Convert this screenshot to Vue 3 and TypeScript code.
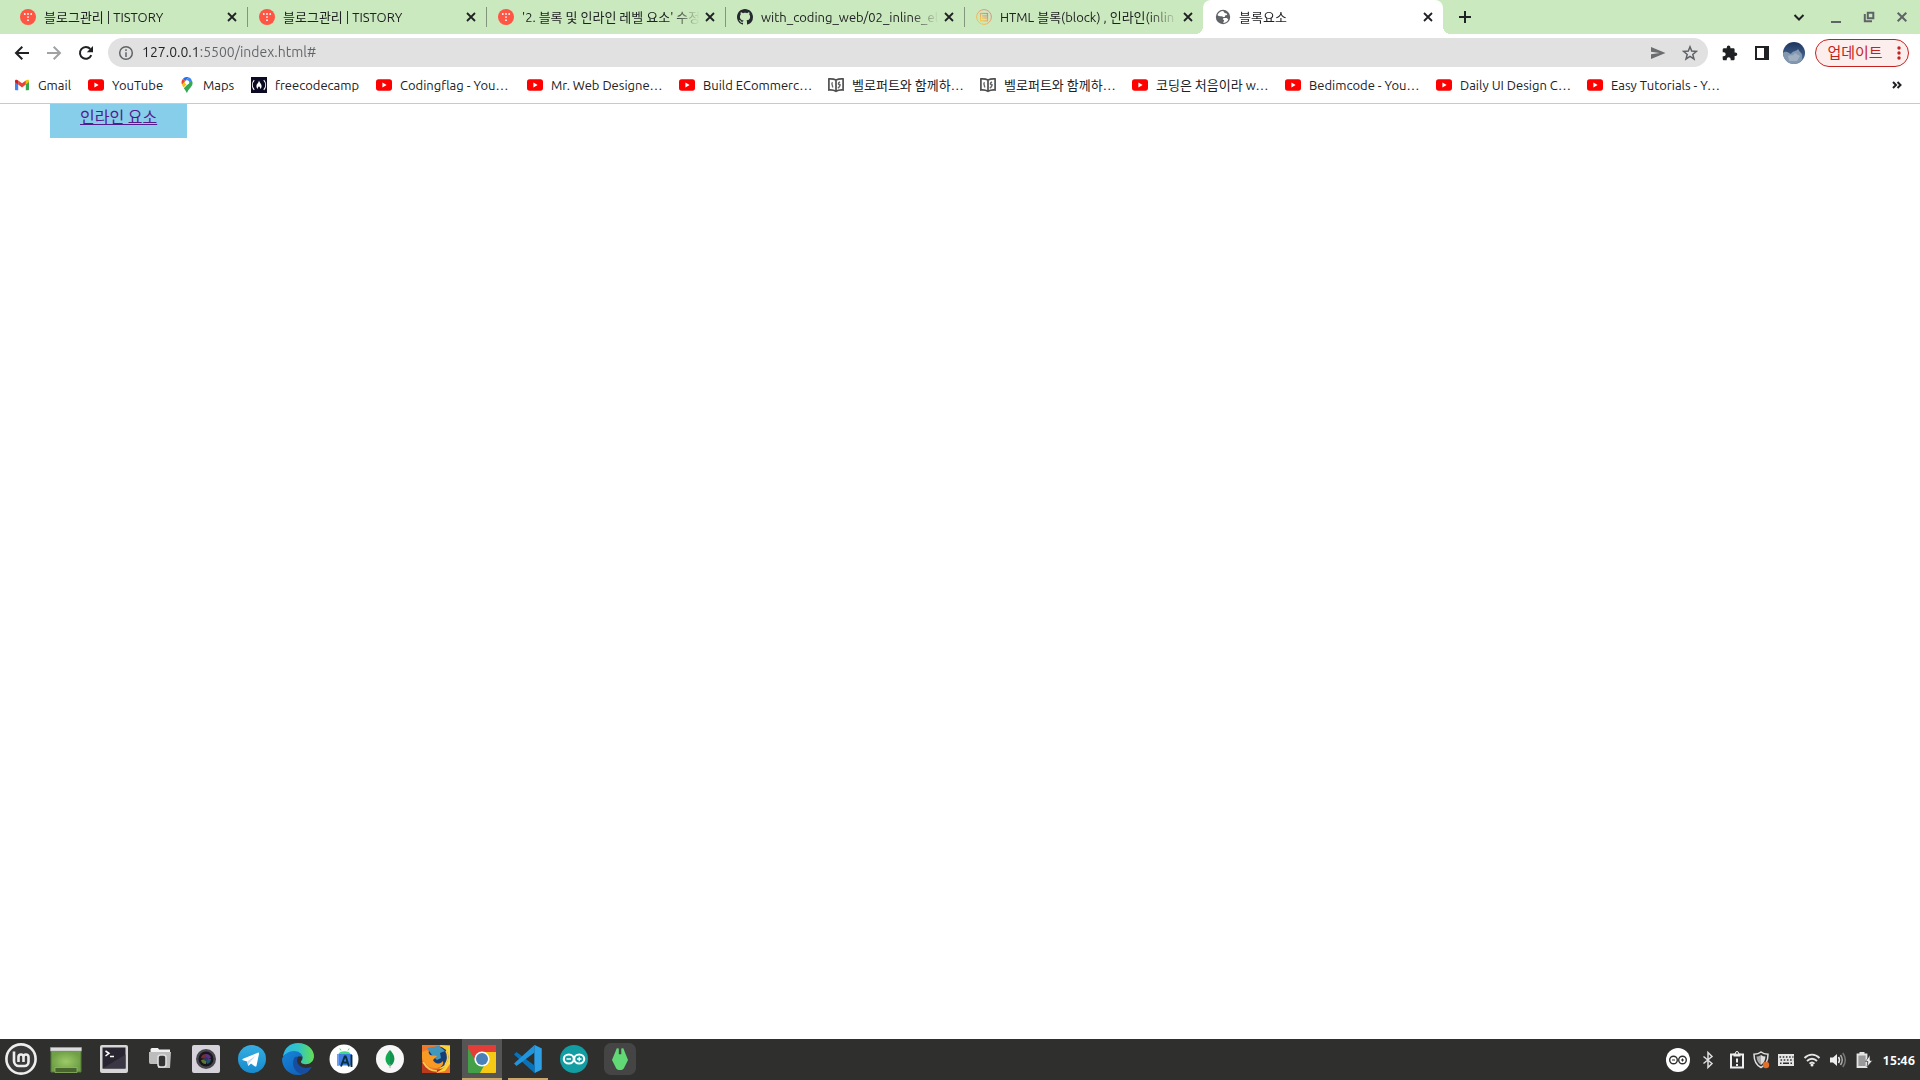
<script setup lang="ts">
import { ref } from 'vue'

interface Tab { icon: string; title: string }
interface Bookmark { icon: string; label: string; width: number }
interface TaskItem { icon: string; name: string; state?: string }
interface TrayItem { icon: string; name: string; width: number; size: number }

const address = ref('127.0.0.1:5500/index.html#')

/* Small artwork, all drawn on a 16 x 16 grid */
const small: Record<string, string> = {
  tistory: '<circle cx="8" cy="8" r="8" fill="#ff5544"/><g fill="#fff"><circle cx="4.8" cy="5" r=".9"/><circle cx="8" cy="5" r=".9"/><circle cx="11.2" cy="5" r=".9"/><circle cx="8" cy="8.1" r=".9"/><circle cx="8" cy="11.2" r=".9"/></g>',
  github: '<path fill="#24292f" d="M8 0C3.58 0 0 3.58 0 8c0 3.54 2.29 6.53 5.47 7.59.4.07.55-.17.55-.38 0-.19-.01-.82-.01-1.49-2.01.37-2.53-.49-2.69-.94-.09-.23-.48-.94-.82-1.13-.28-.15-.68-.52-.01-.53.63-.01 1.08.58 1.23.82.72 1.21 1.87.87 2.33.66.07-.52.28-.87.51-1.07-1.78-.2-3.64-.89-3.64-3.95 0-.87.31-1.59.82-2.15-.08-.2-.36-1.02.08-2.12 0 0 .67-.21 2.2.82.64-.18 1.32-.27 2-.27s1.36.09 2 .27c1.53-1.04 2.2-.82 2.2-.82.44 1.1.16 1.92.08 2.12.51.56.82 1.27.82 2.15 0 3.07-1.87 3.75-3.65 3.95.29.25.54.73.54 1.48 0 1.07-.01 1.93-.01 2.2 0 .21.15.46.55.38A8.01 8.01 0 0 0 16 8c0-4.42-3.58-8-8-8z"/>',
  blog: '<defs><linearGradient id="blogRing" x1="1" y1="0" x2="0" y2="1"><stop offset="0" stop-color="#dd7f95"/><stop offset="1" stop-color="#f5cf45"/></linearGradient></defs><g fill="none" stroke="url(#blogRing)"><circle cx="8" cy="8" r="7.4"/><rect x="4.5" y="4.5" width="7" height="7.4" stroke-width="1.2"/><path d="M6 7h4.200l-.01.01M6 9.200h4.200l-.01.01" stroke-width="1.2"/></g>',
  globe: '<circle cx="8" cy="8" r="7.2" fill="#5f6368"/><path fill="#fff" d="M8.200 1.900c-2.700 0-4.900 1.700-5.700 4 1.300 1.300 3 1.700 4.500 1.300l1.200.9 1.500-.2.7-1.600 1.900-.4-.6-1.500-2-.4zM8.600 8.900l3.200.2 1.500 1.300c-.9 2-2.800 3.400-5.100 3.500l.9-2.700-1.300-1z"/>',
  gmail: '<path fill="#4285f4" d="M1 4.200v8.100c0 .6.4 1 1 1h2.200V6.700z"/><path fill="#34a853" d="M15 4.200v8.100c0 .6-.4 1-1 1h-2.200V6.700z"/><path fill="#fbbc04" d="M11.800 3.500v4L15 5.100V4c0-1.500-1.300-1.600-2.200-1z"/><path fill="#ea4335" d="M4.200 7.500v-4L8 6.300l3.800-2.800v4L8 10.400z"/><path fill="#c5221f" d="M1 4v1.100l3.200 2.400v-4l-1-.6C2.300 2.400 1 2.600 1 4z"/>',
  youtube: '<rect y="2.300" width="16" height="11.400" rx="2.600" fill="#f00"/><path fill="#fff" d="m6.400 5.600 4.200 2.400-4.200 2.400z"/>',
  maps: '<path fill="#1a73e8" d="M9.600.3a5.500 5.500 0 0 0-5.800 1.600l2.600 2.200z"/><path fill="#ea4335" d="M3.800 1.900A5.500 5.500 0 0 0 3 7.600l3.400-3.500z"/><path fill="#4285f4" d="M9.600.3 6.300 4.200a2.200 2.200 0 0 1 3.500 2.700l3-3.700A5.500 5.500 0 0 0 9.600.3z"/><path fill="#fbbc04" d="M6.300 4.200 3 7.700c.3 1 1 1.800 1.700 2.800l5.100-6.100z"/><path fill="#34a853" d="m12.800 3.200-8 8c1.500 1.800 2.200 3.200 3.200 4.800 1.200-3.500 3.900-5.400 5.100-7.700.8-1.600.5-3.700-.3-5.100z"/><circle cx="8" cy="5.500" r="2.100" fill="#fff"/>',
  fcc: '<path fill="#0a0a23" d="M0 0h16v16H0z"/><path fill="none" stroke="#fff" stroke-width="1.100" d="M3.200 3.200C.8 6 .8 10 3.200 12.800M12.800 3.200c2.400 2.800 2.400 6.800 0 9.600"/><path fill="#fff" d="M8 3.600c.4 2.500 2.600 3.200 2.600 5.500 0 1.500-.6 2.500-1.600 3 .4-1.300 0-1.900-1-2.800-1 .9-1.400 1.500-1 2.800-1-.5-1.600-1.500-1.600-3C5.400 6.900 7.600 6.200 8 3.600z"/>',
  book: '<path fill="#fff" stroke="#505050" stroke-width="1.700" d="M.9 1.900C4 1.500 6 2 8 3c2-1 4-1.500 7.100-1.100V13C12 12.700 10 13.100 8 14.300 6 13.100 4 12.700.9 13zM8 3v11"/><path fill="none" stroke="#666" stroke-width="1.400" d="M4.500 5.200c-2 2 1 3.500 0 5.300M12 5c-2.500 1-1.700 3-.4 2.500s-.2 3-1.800 3.500"/>',
}

const big: Record<string, string> = {
  mint: '<circle cx="16" cy="16" r="14.600" fill="#3b3b3b" stroke="#eee" stroke-width="2.600"/><path fill="none" stroke="#eee" stroke-width="2.600" d="M9 8.500v9.500a5 5 0 0 0 5 5h5.500a4 4 0 0 0 4-4v-5a2.500 2.500 0 0 0-5 0v5-5a2.500 2.500 0 0 0-5 0v5"/>',
  desktop: '<defs><radialGradient id="dg"><stop stop-color="#9dcb68"/><stop offset="1" stop-color="#6f9f46"/></radialGradient></defs><path fill="url(#dg)" stroke="#557a38" d="M1 8h30v21H1z"/><path fill="#ddd" stroke="#aaa" stroke-width=".6" d="M.5 4.500h31V8H.5z"/><path fill="#49662f" stroke="#a2cf70" stroke-width=".6" d="M5 29.500v-5h22v5z"/>',
  terminal: '<rect x="2" y="2" width="28" height="28" rx="2" fill="#d6d6d6"/><path fill="#2a2631" d="M4.500 4.500h23v21h-23z"/><path fill="#3c3744" d="m4.500 25.500 23-14v14z"/><path fill="none" stroke="#fff" stroke-width="1.500" d="m7.500 8 3.500 2.300L7.500 13M12 13.500h4"/>',
  files: '<path fill="#f1f1f1" d="M6.500 6.500q0-1.500 1.500-1.500h6l1 1.500h11v3H6.500z"/><path fill="#bdbdbd" d="M5 9h22l-1 16H14v-4H6.500Q5 21 5 19z"/><rect x="14" y="12" width="8" height="12" rx="2.500" fill="#343434" stroke="#dedede" stroke-width="1.600"/>',
  camera: '<rect x="2" y="2" width="28" height="28" rx="2" fill="#d5d2da"/><circle cx="16" cy="16" r="10" fill="#47474b"/><circle cx="16" cy="16" r="7.500" fill="#19151e"/><g opacity=".7"><path fill="#7b3dab" d="M16 11a5 5 0 0 1 5 4l-5 2z"/><path fill="#226f87" d="M21 16a5 5 0 0 1-4 5l-2-5z"/><path fill="#7ca134" d="M16 21a5 5 0 0 1-5-4l5-1z"/><path fill="#a33534" d="M11 15a5 5 0 0 1 5-4v5z"/></g><circle cx="16" cy="16" r="2" fill="#243b64"/>',
  telegram: '<defs><linearGradient id="tgSky" x2="0" y2="1"><stop stop-color="#37aee2"/><stop offset="1" stop-color="#168acd"/></linearGradient></defs><circle cx="16" cy="16" r="14" fill="url(#tgSky)"/><path fill="#fff" d="m7 15.700 14.800-6c.8-.3 1.500.2 1.200 1.400l-2.500 11.600c-.2.9-.8 1.100-1.500.7L15 20.600l-2.100 2c-.6.5-.9.1-1-.5l-.8-3.600L7 17.200c-.8-.4-.8-1.100 0-1.500z"/><path fill="#c8daea" d="m11.100 18.500 9-6-7 7.400-.2 2.700z"/>',
  edge: '<defs><linearGradient id="edgeTop"><stop stop-color="#2fb5e7"/><stop offset=".5" stop-color="#31c5c5"/><stop offset="1" stop-color="#65df51"/></linearGradient><linearGradient id="edgeLow" x2="1" y2="1"><stop stop-color="#1687dc"/><stop offset="1" stop-color="#0f58ae"/></linearGradient></defs><path fill="url(#edgeTop)" d="M1 14C2 5 8 0 16 0c10 0 16 7 16 13 0 6-5 9-10 8-3-.5-4-2-2-4 2-3-1-8-7-8C7 9 2 12 1 14z"/><path fill="url(#edgeLow)" d="M0 16C2 11 7 8 12 8c5 0 8 3 8.500 6-5-3-9 3-6 8s9 6 15 2C26 30 21 32 16 32 7 32 0 25 0 16z"/><path fill="#174da0" d="M13 14c-4 5-2 15 7 17 4-1 8-4 9.800-7.500-6 3-12 1-14-3-1.300-2.700-.8-5 .7-7z"/>',
  android: '<circle cx="16" cy="16" r="14.500" fill="#fff"/><path fill="#3ddc84" d="M10 11.500a7 5 0 0 1 13 0z"/><path stroke="#3ddc84" d="m13 7.500-1.200-2M20 7.500l1.200-2"/><path fill="#3f7de0" d="M9 11h15v11.500H9z"/><path fill="#6ba0f5" d="M9 11h2v11.500H9z"/><path fill="none" stroke="#073042" stroke-width="1.900" d="m13 23.500 3.700-10h1l3.300 10M14 19.500h6M23.500 12v12"/>',
  mongo: '<circle cx="16" cy="16" r="14" fill="#f7f7f7"/><path fill="#10aa50" d="M16 7c-4 4-6 9-3 13.500 1 1.500 2 2 3 2.700z"/><path fill="#12924f" d="M16 7c4 4 6 9 3 13.500-1 1.500-2 2-3 2.700z"/><path stroke="#a5a8a6" d="M16 21v4"/>',
  firefox: '<path fill="#ef792b" d="M2 2h28v28H2z"/><path fill="#fbd33a" d="m20 2 10 1v18l-5 7-9 2c9-7 8-20 4-28z"/><circle cx="18" cy="14" r="10.500" fill="#183d75"/><path fill="#4297bd" d="m7 5 12-2 6 5-5 2 1 5-4 2-5-5z"/><path fill="#f89a24" d="M2 9 7 7l3 5 7 1-4 4c2 4 6 5 10 1 1 4-2 7-6 7-8 1-13-5-15-10z"/><path fill="#bc3b1e" d="M2 18c5 7 12 12 23 6l-9 6H2z"/><path fill="none" stroke="#fbc94d" stroke-width="1.700" d="M3 19c4 7 9 9 14 9M26 8c3 4 2 10-1 14"/>',
  chrome: '<defs><clipPath id="chromeTile"><rect x="2" y="2" width="28" height="28" rx="1"/></clipPath></defs><g clip-path="url(#chromeTile)"><path fill="#43a047" d="M2 2h28v28H2z"/><path fill="#f6c915" d="M16 9h14v21H14l6-11z"/><path fill="#e43d38" d="M2 2h28v7H16l-6 10L2 5z"/></g><circle cx="16" cy="16" r="7.600" fill="#fff"/><circle cx="16" cy="16" r="6" fill="#4880b7"/>',
  vscode: '<path fill="#0875b8" d="m22.500 2 7.500 3.500v21L22.500 30V2z"/><path fill="#2da0e6" d="m22.500 2 7 3.500v21l-7 3.500z"/><path fill="#0873b8" d="M2 11.500 4.500 9l18 13.500V30z"/><path fill="#2195dc" d="M2 20.500 4.500 23l18-13.500V2z"/>',
  arduino: '<circle cx="16" cy="16" r="14" fill="#129da3"/><g fill="none" stroke="#fff" stroke-width="2.100"><ellipse cx="10.800" cy="16" rx="5" ry="4.500"/><ellipse cx="21.200" cy="16" rx="5" ry="4.500"/></g><path stroke="#fff" stroke-width="1.300" d="M8.500 16H13m6 0h4.500m-2.250-2.200v4.400"/>',
  greenapp: '<rect width="32" height="32" rx="7" fill="#454545"/><path fill="#61da76" d="m12.800 5.300 2 .3v5.600h2.500V5.600l2-.3L24 17l-4 8c-.8 1.500-1.800 2-4 2s-3.200-.5-4-2l-4-8z"/>',
}

/* Tray glyphs on a 24 x 24 grid */
const trayArt: Record<string, string> = {
  arduino: '<circle cx="12" cy="12" r="12" fill="#fff"/><g fill="none" stroke="#2f2f2e" stroke-width="1.400"><circle cx="7.500" cy="12" r="3.800"/><circle cx="16.500" cy="12" r="3.800"/><path d="M6 12h3m6 0h3m-1.500-1.500v3" stroke-width="1"/></g>',
  bluetooth: '<path fill="none" stroke="#dedede" stroke-width="1.500" d="m7.500 8.500 8.500 7-4 4v-15l4 4-8.500 7"/>',
  clipboard: '<path fill="none" stroke="#eee" stroke-width="2" d="M6 6.500h12v13H6z"/><path fill="#eee" d="M8.500 5.500H11a1 1.500 0 0 1 2 0h2.500v3h-7z"/><path fill="#eee" d="M11 10.500h2v4h-2zm0 5.500h2v2h-2z"/><circle cx="12" cy="5" r="1.500" fill="#2f2f2e" stroke="#eee"/>',
  shield: '<path fill="#303030" stroke="#dedede" stroke-width="1.500" d="M12 4c-2.300 2-4.500 2.200-7 2.200 0 6 2 10.800 7 13.300 5-2.500 7-7.300 7-13.300-2.500 0-4.700-.2-7-2.200z"/><path fill="#aaa" d="M12 7c-1.500 1-3 1.500-4.500 1.500.3 3.700 1.500 6.500 4.500 8.500z"/><path fill="#ddd" d="M12 7c1.500 1 3 1.500 4.500 1.500-.3 3.700-1.500 6.500-4.500 8.500z"/><circle cx="17" cy="17" r="3.200" fill="#e46f2a"/>',
  keyboard: '<path fill="#e5e5e5" d="M4 6h16v12H4z"/><path fill="none" stroke="#303030" stroke-width="1.600" stroke-dasharray="1.600 1.600" d="M5.500 9h14M6.500 12h13"/><path stroke="#303030" stroke-width="1.600" d="M6 15.200h1.500m1.500 0h6m1.500 0H18"/>',
  wifi: '<g fill="none" stroke="#e5e5e5" stroke-width="1.900"><path d="M4.500 10c4.500-4.500 10.500-4.500 15 0M7 13c3-3 7-3 10 0M9.500 15.700q2.500-2.500 5 0"/></g><circle cx="12" cy="17" r="1.500" fill="#eee"/>',
  volume: '<path fill="#eee" d="M4 9.500h3L11 6v12l-4-3.500H4z"/><path fill="none" stroke="#eee" stroke-width="1.500" d="M12.500 9q2 3 0 6"/><path fill="none" stroke="#aaa" stroke-width="1.500" d="M14.500 7q3.500 5 0 10"/><path fill="none" stroke="#777" stroke-width="1.500" d="M16.800 5q5 7 0 14"/>',
  battery: '<path fill="#999" stroke="#e5e5e5" stroke-width="1.800" d="M5.500 6.500h9v12.500h-9z"/><path fill="#e5e5e5" d="M7.500 4h5v3h-5z"/><path fill="#eee" stroke="#303030" stroke-width=".6" d="m18 7-4.500 6.500h2.500L15 19l5.500-6.500H18z"/>',
}

const tabs: Tab[] = [
  { icon: 'tistory', title: '블로그관리 | TISTORY' },
  { icon: 'tistory', title: '블로그관리 | TISTORY' },
  { icon: 'tistory', title: "'2. 블록 및 인라인 레벨 요소' 수정" },
  { icon: 'github', title: 'with_coding_web/02_inline_el' },
  { icon: 'blog', title: 'HTML 블록(block) , 인라인(inlin' },
  { icon: 'globe', title: '블록요소' },
]
const activeTab = ref(5)

const bookmarks: Bookmark[] = [
  { icon: 'gmail', label: 'Gmail', width: 74 },
  { icon: 'youtube', label: 'YouTube', width: 91 },
  { icon: 'maps', label: 'Maps', width: 72 },
  { icon: 'fcc', label: 'freecodecamp', width: 125 },
  { icon: 'youtube', label: 'Codingflag - You…', width: 151 },
  { icon: 'youtube', label: 'Mr. Web Designe…', width: 152 },
  { icon: 'youtube', label: 'Build ECommerc…', width: 149 },
  { icon: 'book', label: '벨로퍼트와 함께하…', width: 152 },
  { icon: 'book', label: '벨로퍼트와 함께하…', width: 152 },
  { icon: 'youtube', label: '코딩은 처음이라 w…', width: 153 },
  { icon: 'youtube', label: 'Bedimcode - You…', width: 151 },
  { icon: 'youtube', label: 'Daily UI Design C…', width: 151 },
  { icon: 'youtube', label: 'Easy Tutorials - Y…', width: 152 },
]

const tasks: TaskItem[] = [
  { icon: 'terminal', name: 'Terminal' },
  { icon: 'files', name: 'Files' },
  { icon: 'camera', name: 'Camera' },
  { icon: 'telegram', name: 'Telegram' },
  { icon: 'edge', name: 'Edge' },
  { icon: 'android', name: 'Android Studio' },
  { icon: 'mongo', name: 'MongoDB Compass' },
  { icon: 'firefox', name: 'Firefox' },
  { icon: 'chrome', name: 'Chrome', state: 'running focused' },
  { icon: 'vscode', name: 'Visual Studio Code', state: 'running' },
  { icon: 'arduino', name: 'Arduino' },
  { icon: 'greenapp', name: 'Application' },
]

const tray: TrayItem[] = [
  { icon: 'arduino', name: 'Arduino', width: 29, size: 24 },
  { icon: 'bluetooth', name: 'Bluetooth', width: 32, size: 24 },
  { icon: 'clipboard', name: 'Clipboard', width: 25, size: 24 },
  { icon: 'shield', name: 'Updates', width: 24, size: 24 },
  { icon: 'keyboard', name: 'Keyboard', width: 26, size: 24 },
  { icon: 'wifi', name: 'Network', width: 26, size: 24 },
  { icon: 'volume', name: 'Volume', width: 26, size: 24 },
  { icon: 'battery', name: 'Battery', width: 25, size: 24 },
]
</script>

<template>
  <div class="screen">
    <header>
      <div class="tabstrip">
        <div v-for="(tab, i) in tabs" :key="i" class="tab" :class="{ active: i === activeTab, divided: i + 1 < activeTab }">
          <button class="tab-main" @click="activeTab = i">
            <svg class="i16" viewBox="0 0 16 16" v-html="small[tab.icon]" />
            <span class="tab-title">{{ tab.title }}</span>
          </button>
          <button class="tab-close" aria-label="Close tab">
            <svg class="i16" viewBox="0 0 16 16"><path d="m4 4 8 8m0-8-8 8" class="line" /></svg>
          </button>
        </div>
        <button class="slot new-tab" aria-label="New tab">
          <svg class="i16" viewBox="0 0 16 16"><path d="M8 2v12M2 8h12" class="line" /></svg>
        </button>
        <div class="window-controls">
          <button class="slot search-tabs" aria-label="Search tabs"><svg class="i16" viewBox="0 0 16 16"><path d="m3.500 6 4.500 4.500L12.500 6" class="line" /></svg></button>
          <button class="slot grey" aria-label="Minimise"><svg class="i16" viewBox="0 0 16 16"><path d="M3 13h10" class="line" /></svg></button>
          <button class="slot grey" aria-label="Restore"><svg class="i16" viewBox="0 0 16 16"><path d="M6.800 3.800h5.500v5.500H6.800zM3.800 5v7.300H11" class="line" /></svg></button>
          <button class="slot grey" aria-label="Close window"><svg class="i16" viewBox="0 0 16 16"><path d="m3.700 3.700 8.600 8.600m0-8.600-8.600 8.600" class="line" /></svg></button>
        </div>
      </div>

      <div class="toolbar">
        <button class="slot" aria-label="Back"><svg class="i20" viewBox="0 0 20 20"><path d="M17 10H4m6.300-6.300L4 10l6.300 6.300" class="line" /></svg></button>
        <button class="slot dim" aria-label="Forward"><svg class="i20" viewBox="0 0 20 20"><path d="M3 10h13M9.700 3.700 16 10l-6.300 6.300" class="line" /></svg></button>
        <button class="slot" aria-label="Reload"><svg class="i20" viewBox="0 0 20 20"><path d="M15.300 12.200A5.900 5.900 0 1 1 14.300 6" class="line" /><path d="M17 3v6.200h-6.200z" fill="currentColor" /></svg></button>
        <div class="omnibox">
          <button class="slot grey" aria-label="Site information"><svg class="i16" viewBox="0 0 16 16"><circle cx="8" cy="8" r="6.300" class="line thin" /><path d="M8 7.300V12M8 4.200V6" class="line thin" /></svg></button>
          <input v-model="address" class="address" type="text" aria-label="Address" spellcheck="false">
          <button class="slot grey" aria-label="Share"><svg class="i16" viewBox="0 0 16 16"><path fill="#6b6d70" d="M1 2v4.800L9.500 8 1 9.200V14l14.500-6z" /></svg></button>
          <button class="slot grey" aria-label="Bookmark"><svg class="i16" viewBox="0 0 16 16"><path d="m8 1.800 1.700 4.300 4.700.3-3.600 3 1.200 4.600L8 11.400 4 14l1.200-4.600-3.600-3 4.700-.3z" class="line thin" /></svg></button>
        </div>
        <button class="slot" aria-label="Extensions"><svg class="i16" viewBox="0 0 16 16"><path fill="currentColor" d="M13.500 7.500h-.9V4.600c0-.8-.6-1.300-1.300-1.300H8.400v-1a1.800 1.800 0 0 0-3.600 0v1H2c-.7 0-1.300.6-1.300 1.300v2.700h1a2 2 0 0 1 0 4h-1V14c0 .8.600 1.300 1.300 1.300h2.700v-1a2 2 0 0 1 4 0v1h2.600c.8 0 1.300-.6 1.300-1.300v-2.900h.9a1.800 1.800 0 0 0 0-3.600z" /></svg></button>
        <button class="slot" aria-label="Side panel"><svg class="i16" viewBox="0 0 16 16"><path fill="currentColor" fill-rule="evenodd" d="M1 1h14v14H1zm2 2v10h7V3z" /></svg></button>
        <button class="slot" aria-label="Profile">
          <svg class="avatar" viewBox="0 0 22 22">
            <defs><linearGradient id="sky" x2="0" y2="1"><stop stop-color="#1d355f" /><stop offset="1" stop-color="#55779f" /></linearGradient><clipPath id="round"><circle cx="11" cy="11" r="11" /></clipPath></defs>
            <g clip-path="url(#round)"><path fill="url(#sky)" d="M0 0h22v22H0z" /><path fill="#8297b0" d="M0 11c3-3 6 0 8 1 2-4 5-2 7-5l2 3c3 2 2 5 2 8l-5 4H4c-3-3-4-7-4-11z" /><path fill="#aebac8" opacity=".7" d="M5 14c3-2 4 1 7-3l5 3-3 5H6z" /></g>
          </svg>
        </button>
        <button class="update">업데이트<svg class="dots" viewBox="0 0 4 16"><circle cx="2" cy="3" r="1.700" /><circle cx="2" cy="8" r="1.700" /><circle cx="2" cy="13" r="1.700" /></svg></button>
      </div>

      <nav class="bookmarks" aria-label="Bookmarks">
        <a v-for="(b, i) in bookmarks" :key="i" href="#" class="bookmark" :style="{ width: b.width + 'px' }">
          <svg class="i16" viewBox="0 0 16 16" v-html="small[b.icon]" />
          <span>{{ b.label }}</span>
        </a>
        <button class="slot more" aria-label="More bookmarks"><svg class="i16" viewBox="0 0 16 16"><path d="m4 5 3 3-3 3m4.500-6 3 3-3 3" class="line" /></svg></button>
      </nav>
    </header>

    <main>
      <a href="#" class="inline-box">인라인 요소</a>
    </main>

    <footer class="taskbar">
      <button class="task" aria-label="Menu"><svg class="i32" viewBox="0 0 32 32" v-html="big.mint" /></button>
      <button class="task show-desktop" aria-label="Show desktop"><svg class="i32" viewBox="0 0 32 32" v-html="big.desktop" /></button>
      <div class="task-list">
        <button v-for="t in tasks" :key="t.name" class="task" :class="t.state" :aria-label="t.name">
          <svg class="i32" viewBox="0 0 32 32" v-html="big[t.icon]" />
        </button>
      </div>
      <div class="tray">
        <button v-for="t in tray" :key="t.name" class="tray-item" :aria-label="t.name" :style="{ width: t.width + 'px' }">
          <svg :width="t.size" :height="t.size" viewBox="0 0 24 24" v-html="trayArt[t.icon]" />
        </button>
        <time class="clock">15:46</time>
      </div>
    </footer>
  </div>
</template>

<style>
body {
  margin: 0;
  background: #fff;
}
</style>

<style scoped>
.screen {
  display: flex;
  flex-direction: column;
  min-height: 100vh;
  font: 13px/20px Ubuntu, "Noto Sans", "Noto Sans CJK KR", sans-serif;
  color: #202124;
}
button {
  display: flex;
  align-items: center;
  justify-content: center;
  flex: none;
  padding: 0;
  border: 0;
  background: none;
  font: inherit;
  color: inherit;
}
svg {
  display: block;
  flex: none;
}
.i16 { width: 16px; height: 16px; }
.i20 { width: 20px; height: 20px; }
.i32 { width: 32px; height: 32px; }
.line {
  fill: none;
  stroke: currentColor;
  stroke-width: 2;
}
.thin { stroke-width: 1.5; }
.slot {
  width: 32px;
  height: 28px;
}
.grey { color: #5f6368; }
.dim { color: #a0a2a4; }

.tabstrip {
  display: flex;
  align-items: center;
  height: 34px;
  padding: 0 2px 0 8px;
  background: #cbe9be;
}
.tab {
  position: relative;
  display: flex;
  align-items: center;
  gap: 2px;
  flex: 0 1 239px;
  min-width: 0;
  height: 34px;
  padding: 0 7px 0 12px;
  box-sizing: border-box;
}
.tab-main {
  flex: 1;
  justify-content: flex-start;
  gap: 8px;
  min-width: 0;
}
.tab-title {
  flex: 1;
  overflow: hidden;
  text-align: left;
  white-space: nowrap;
  mask-image: linear-gradient(to left, transparent, #000 28px);
}
.tab-close path { stroke-width: 1.8; }
.divided::after {
  content: "";
  position: absolute;
  right: -1px;
  top: 7px;
  width: 1px;
  height: 20px;
  background: #83957c;
}
.active {
  background: #fff;
  border-radius: 8px 8px 0 0;
  flex-basis: 240px;
}
.active::before,
.active::after {
  content: "";
  position: absolute;
  bottom: 0;
  width: 8px;
  height: 8px;
}
.active::before {
  right: 100%;
  background: radial-gradient(circle at 0 0, transparent 8px, #fff 8px);
}
.active::after {
  left: 100%;
  background: radial-gradient(circle at 100% 0, transparent 8px, #fff 8px);
}
.new-tab { margin-left: 6px; }
.window-controls {
  display: flex;
  gap: 1px;
  margin-left: auto;
}
.search-tabs { margin-right: 4px; }

.toolbar {
  display: flex;
  align-items: center;
  height: 37px;
  padding: 0 11px 0 6px;
}
.omnibox {
  display: flex;
  align-items: center;
  flex: 1;
  height: 29px;
  margin: 0 6px;
  padding: 0 2px;
  border-radius: 15px;
  background: #e1e1e1;
}
.address {
  flex: 1;
  min-width: 0;
  height: 24px;
  padding: 0 0 2px;
  box-sizing: border-box;
  border: 0;
  outline: 0;
  font: 14px/22px Ubuntu, "Noto Sans", "Noto Sans CJK KR", sans-serif;
  color: transparent;
  background: linear-gradient(to right, #202124 56px, #606367 56px);
  background-clip: text;
}
.avatar { width: 22px; height: 22px; }
.update {
  gap: 14px;
  box-sizing: border-box;
  width: 94px;
  height: 28px;
  margin-left: 5px;
  padding-left: 4px;
  border: 1px solid #c5221f;
  border-radius: 14px;
  background: #fceeed;
  color: #c5221f;
  font-size: 15px;
}
.dots {
  width: 4px;
  height: 16px;
  fill: currentColor;
}

.bookmarks {
  display: flex;
  align-items: center;
  height: 28px;
  padding: 0 7px 4px 14px;
  border-bottom: 1px solid #c9c9c9;
}
.bookmark {
  display: flex;
  align-items: center;
  gap: 8px;
  color: inherit;
  text-decoration: none;
  white-space: nowrap;
}
.more { margin-left: auto; }

main {
  flex: 1;
  padding: 0 50px;
}
.inline-box {
  display: inline-block;
  padding: 0 30px 10px;
  background: #87ceeb;
  color: #551a8b;
  font: 16px/24px "Noto Sans CJK KR", sans-serif;
}

.taskbar {
  display: flex;
  align-items: center;
  height: 41px;
  padding: 0 5px 0 1px;
  background: #2f2f2e;
  color: #fff;
}
.task {
  width: 40px;
  height: 41px;
  padding-bottom: 2px;
  box-sizing: border-box;
}
.show-desktop { margin: 0 8px 0 5px; }
.task-list {
  display: flex;
  gap: 6px;
}
.focused { background: #555; }
.running { box-shadow: inset 0 -2px #c8a767; }
.tray {
  display: flex;
  align-items: center;
  margin-left: auto;
}
.clock {
  margin-left: 6px;
  font-weight: 700;
}
</style>
